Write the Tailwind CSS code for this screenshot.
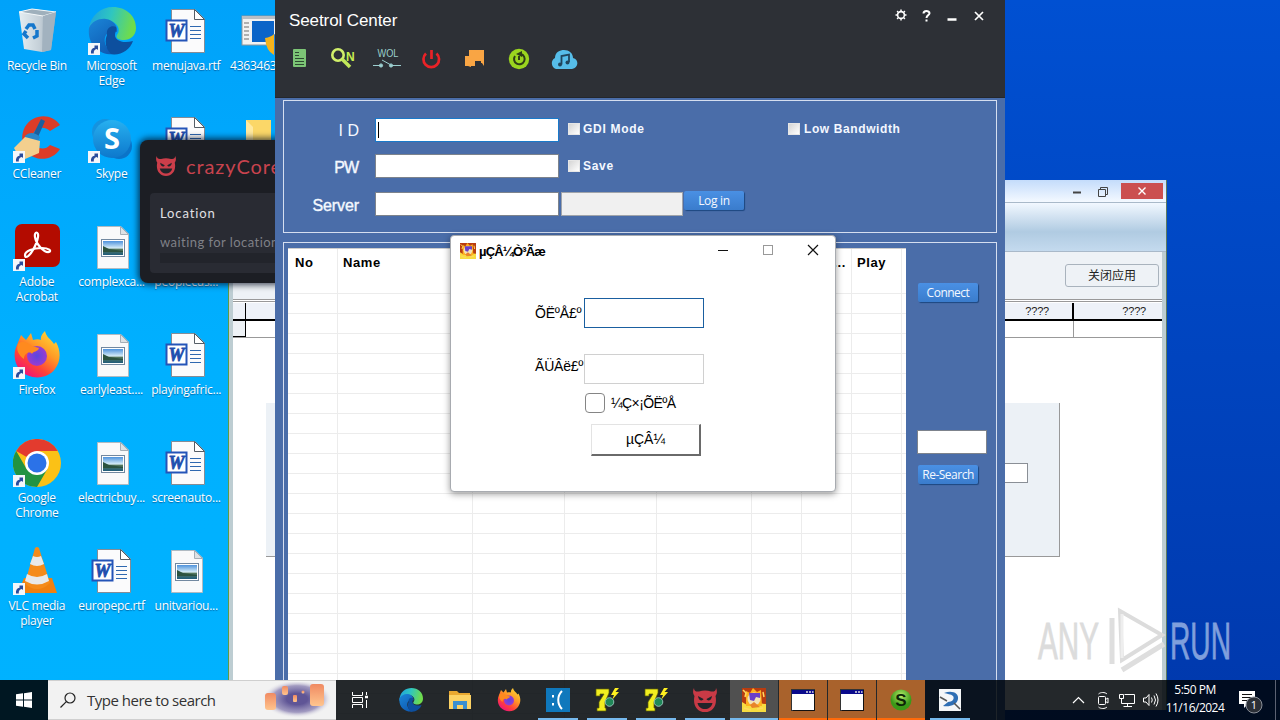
<!DOCTYPE html>
<html lang="en">
<head>
  <meta charset="UTF-8" />
  <meta name="viewport" content="width=device-width, initial-scale=1.0" />
  <title>Desktop</title>
  <script src="https://cdn.jsdelivr.net/npm/@tailwindcss/browser@4"></script>
</head>
<body class="relative w-[1280px] h-[720px] overflow-hidden bg-linear-to-b from-[#0050d2] to-[#0038ac] font-['Open_Sans','Noto_Sans',sans-serif]">

  <!-- Icon sprites -->
  <svg class="absolute w-0 h-0">
    <defs>
      <linearGradient id="gEdgeA" x1="0" y1="0" x2="1" y2="0.2"><stop offset="0" stop-color="#1d9fe0" /><stop offset=".5" stop-color="#2fc6c0" /><stop offset="1" stop-color="#6fdc4c" /></linearGradient>
      <linearGradient id="gEdgeB" x1="0" y1="0" x2="0.6" y2="1"><stop offset="0" stop-color="#1b86d8" /><stop offset="1" stop-color="#0f5cb4" /></linearGradient>
      <linearGradient id="gFox" x1="1" y1="0" x2=".3" y2="1"><stop offset="0" stop-color="#ffe83c" /><stop offset=".45" stop-color="#ff9a26" /><stop offset=".75" stop-color="#ff4338" /><stop offset="1" stop-color="#f0127a" /></linearGradient>
      <radialGradient id="gFoxIn"><stop offset="0" stop-color="#5a46e0" /><stop offset="1" stop-color="#9a3bd0" /></radialGradient>
      <linearGradient id="gSky" x1="0" y1="0" x2="0" y2="1"><stop offset="0" stop-color="#4e92dc" /><stop offset=".5" stop-color="#d5ecf7" /><stop offset=".6" stop-color="#55785c" /><stop offset="1" stop-color="#1f5c7c" /></linearGradient>
      <linearGradient id="gSkype" x1="0" y1="0" x2="0" y2="1"><stop offset="0" stop-color="#27b0f0" /><stop offset="1" stop-color="#0d78cc" /></linearGradient>
      <linearGradient id="gBin" x1="0" y1="0" x2="1" y2="0"><stop offset="0" stop-color="#e4edf2" /><stop offset=".55" stop-color="#c5d0d8" /><stop offset="1" stop-color="#8ea2b2" /></linearGradient>
      <radialGradient id="gBall" cx=".5" cy=".3"><stop offset="0" stop-color="#b8ec6a" /><stop offset="1" stop-color="#3a9818" /></radialGradient>
    </defs>
    <symbol id="link" viewBox="0 0 12 12">
      <rect width="12" height="12" fill="#f4f6fa" />
      <path d="M3 10.500C2.500 7 4 5 6.500 4.700V2.500H10V7L8.800 6C6.500 6.500 5.500 8 5.800 10.500Z" fill="#2b4c9c" />
    </symbol>
    <symbol id="bin" viewBox="0 0 48 48">
      <path d="M6 5L19 2L43 5L38 43L29 45L11 42Z" fill="url(#gBin)" />
      <path d="M6 5L19 2L43 5L30 9Z" fill="#9fb0bc" stroke="#f4f8fa" />
      <path d="M30 9L43 5L38 43L29 45Z" fill="#a2b2bf" />
      <path d="M13 22L16 18L20 18L22 22M24 23L24 29L20 31M15 31L11 27L13 24" fill="none" stroke="#1577cc" stroke-width="3.500" />
    </symbol>
    <symbol id="edge" viewBox="0 0 48 48">
      <path d="M1 21C3 8 13 0 25 0C38 0 48 9 48 21C48 29 42 33 36 33C31 33 27 31 29 28C34 22 28 14 20 14C11 14 3 20 1 27Z" fill="url(#gEdgeA)" />
      <path d="M1 21C4 14 12 11 18 12C26 13 30 20 29 25C22 22 15 27 17 36C18 41 22 45 27 47C12 49 -1 38 1 21Z" fill="url(#gEdgeB)" />
      <path d="M19 28C18 20 24 18 28 20C29 24 27 25 27 28C27 33 34 37 45 34C42 43 32 49 23 47C18 42 16 35 19 28Z" fill="#0d4f9e" />
    </symbol>
    <symbol id="word" viewBox="0 0 48 48">
      <path d="M9.500 2.500H33L42.500 12V45.500H9.500Z" fill="#fbfbfc" stroke="#858c96" />
      <path d="M32.500 2.500V12.500H42.500Z" fill="#fff" stroke="#555d66" />
      <path d="M28 19.500H39M28 23.500H39M28 27.500H39M28 31.500H39" stroke="#2f68b0" />
      <rect x="4.500" y="13.500" width="20" height="20" fill="#fff" stroke="#2454b8" stroke-width="2" />
      <text x="14.500" y="30" font-family="Liberation Serif" font-size="18" font-style="italic" font-weight="bold" text-anchor="middle" fill="#1f4fae" stroke="#1f4fae" stroke-width=".8">W</text>
    </symbol>
    <symbol id="pic" viewBox="0 0 48 48">
      <path d="M9.500 3.500H33L40.500 11V45.500H9.500Z" fill="#f9f9fa" stroke="#b0bac2" />
      <path d="M32.500 3.500V11.500H40.500Z" fill="#dde1e4" stroke="#a5aeb6" />
      <rect x="13.500" y="16.500" width="23" height="17" fill="#fff" stroke="#7288a0" />
      <rect x="15" y="18" width="20" height="14" fill="url(#gSky)" />
      <path d="M15 23L21 26L35 28V29L15 29Z" fill="#2c5340" />
    </symbol>
    <symbol id="installer" viewBox="0 0 48 48">
      <rect x="5" y="9" width="43" height="29" fill="#f2f2f2" stroke="#8f9499" />
      <path d="M5 9H48V12H5Z" fill="#b9bec4" />
      <path d="M7 16H12M7 20H12M7 24H12M7 28H12M7 32H12" stroke="#9a9a9a" stroke-width="1.500" />
      <rect x="15" y="14" width="22" height="21" fill="#0b64c8" />
      <path d="M28 31Q34 30 37 27V48Q29 44 28 31Z" fill="#f5b31c" />
      <path d="M37 27Q41 30 47 31Q46 44 37 48Z" fill="#2c7fd0" />
    </symbol>
    <symbol id="folder" viewBox="0 0 48 48">
      <path d="M9 5H34V45H9Z" fill="#fbd768" /><path d="M9 5L16 12V45H9Z" fill="#ffe9a0" />
    </symbol>
    <symbol id="ccleaner" viewBox="0 0 48 48">
      <path d="M47 10C41 1 29 -1 20 4C8 10 6 28 14 37C22 47 40 46 47 34L37 30C32 36 22 34 20 26C17 16 28 8 37 16Z" fill="#dc3c28" />
      <path d="M28 4L32 6L25 22L20 20Z" fill="#1b5f9e" />
      <path d="M12 21C16 17 22 17 27 22L25 27L12 26Z" fill="#2a86c8" />
      <path d="M12 22L27 26L26 38L12 44L5 40L1 33Z" fill="#f3cf8e" />
    </symbol>
    <symbol id="skype" viewBox="0 0 48 48">
      <circle cx="17" cy="17" r="13" fill="#1593df" /><circle cx="31" cy="31" r="13" fill="#0b74c8" />
      <circle cx="24" cy="24" r="19" fill="url(#gSkype)" />
      <text x="24" y="34" font-family="Open Sans" font-size="29" font-weight="bold" text-anchor="middle" fill="#fff">S</text>
    </symbol>
    <symbol id="acrobat" viewBox="0 0 48 48">
      <rect x="2" y="1" width="45" height="43" rx="7" fill="#b30b00" />
      <path d="M12 32C12 28 20 25 29 25C36 25 39 28 36 29C31 30 23 21 22 14C21 8 26 8 25 14C24 21 17 34 13 34Q12 34 12 32Z" fill="none" stroke="#fff" stroke-width="2.200" />
    </symbol>
    <symbol id="firefox" viewBox="0 0 48 48">
      <path d="M4 14L8 4L13 9L18 2L20 9C23 8 26 8 28 9C27 5 30 2 32 0C33 6 38 8 41 13L43 11C48 20 48 30 42 38C34 49 16 49 7 39C1 32 0 22 4 14Z" fill="url(#gFox)" />
      <circle cx="24" cy="25" r="10" fill="url(#gFoxIn)" />
      <path d="M5 13C9 9 14 11 19 15L26 17C25 21 20 20 19 23C17 20 11 22 11 28C5 24 3 18 5 13Z" fill="#ff8a1e" />
    </symbol>
    <symbol id="chrome" viewBox="0 0 48 48">
      <circle cx="24" cy="24" r="24" fill="#fbc116" />
      <path d="M24 24L3.200 12A24 24 0 0 1 44.800 12H24Z" fill="#e33b2e" />
      <path d="M3.200 12A24 24 0 0 0 24 48L34.400 30L24 36L13.600 30Z" fill="#229342" />
      <circle cx="24" cy="24" r="12" fill="#fff" /><circle cx="24" cy="24" r="9.500" fill="#2b72e8" />
    </symbol>
    <symbol id="vlc" viewBox="0 0 48 48">
      <path d="M11 31H39L44 46H5Z" fill="#f08010" />
      <path d="M22 1Q24 -1 26 1L37 36Q31 42 24 42Q17 42 12 36Z" fill="#f58b1a" />
      <path d="M20 9Q24 11 28 9L31 17Q24 21 17 17ZM14 27Q24 33 34 27L36 34Q24 41 12 34Z" fill="#e9e9e9" />
    </symbol>
    <symbol id="devil" viewBox="0 0 24 24">
      <path d="M1 0C1 3 3 4 6 3.500C10 2.300 14 2.300 18 3.500C21 4 23 3 23 0C24.500 3 24 6 22.500 8C24.500 17 20 24 12 24C4 24 -.5 17 1.500 8C0 6 -.5 3 1 0Z" />
      <path d="M5 8L10.500 11C9.500 13.500 5.500 13 5 8ZM19 8L13.500 11C14.500 13.500 18.500 13 19 8ZM4.500 15H19.500C18.500 19 15.500 21 12 21C8.500 21 5.500 19 4.500 15Z" fill="#22242a" />
    </symbol>
    <symbol id="crown" viewBox="0 0 24 24">
      <rect width="24" height="24" fill="#b83c10" />
      <path d="M0 14L5 17L12 15L24 16V24H0Z" fill="#f7dc40" />
      <path d="M4 3L8 5L11 0L15 4L19 2L20 18H4Z" fill="#ffb020" />
      <circle cx="12" cy="11" r="6.500" fill="#f3e2b4" />
      <path d="M7 5H18V10L14 9L12 13L8 12Z" fill="#6a3fc8" />
      <path d="M8 17L12 14L18 19L10 20Z" fill="#e8842a" />
      <path d="M1 2L4 5L3 9M21 4L22 9M2 20L9 22M15 21L21 20" stroke="#ffda60" stroke-width="1.500" fill="none" />
    </symbol>
    <symbol id="seven" viewBox="0 0 24 24">
      <path d="M1 1H14V5L10 14V20H11V23H2V20H4V14L9 6H5V8H1Z" fill="#f2ee20" stroke="#606000" stroke-width=".7" />
      <path d="M20 0L16 7H19L17 12L24 4H20.500L24 0Z" fill="#fff020" />
      <circle cx="14.500" cy="14" r="4.300" fill="#208858" stroke="#aad8d0" stroke-width=".8" />
    </symbol>
    <symbol id="blankwin" viewBox="0 0 24 24">
      <rect x=".5" y="1.500" width="23" height="21" fill="#fff" stroke="#333" />
      <path d="M1 2H23V6H1Z" fill="#0a0a8c" />
      <path d="M15 4H17M18 4H20M21 4H22.500" stroke="#ddd" stroke-width="1.500" />
      <path d="M2 22.500H23.500V2" stroke="#111" fill="none" />
    </symbol>
  </svg>

  <!-- Wallpaper, bright side -->
  <div class="absolute inset-y-0 left-0 w-[300px] bg-linear-to-b from-[#00a2fa] via-[#00b0ff] via-50% to-[#00b2ff]"></div>

  <!-- Desktop icons -->
  <div id="desktop" class="absolute top-0 left-0 grid grid-flow-col grid-rows-[repeat(6,108px)] auto-cols-[74.7px]"></div>

  <!-- Back window -->
  <section class="absolute left-[228px] top-[180px] w-[939px] h-[530px] flex flex-col bg-white border-l border-r border-l-[#5d9b45] border-r-[#5c7a60] font-['Liberation_Sans','Noto_Sans_CJK_SC',sans-serif]">
    <div class="h-[22px] shrink-0 flex justify-end items-center pr-[3px] bg-linear-to-b from-[#c4dcfb] to-[#f4f9ff]">
      <svg class="w-10 h-3.5 mr-[9px] -mt-px" viewBox="0 0 40 14" fill="none" stroke="#444"><path d="M1 8.500H9" stroke-width="2" /><path d="M26.500 5.500H33.500V12.500H26.500ZM28.500 5V3.500H35.500V10.500H34" /></svg>
      <div class="w-[42px] h-4 bg-[#cb4f50] flex items-center justify-center">
        <svg class="w-2 h-2" viewBox="0 0 8 8" stroke="#fff" stroke-width="1.400"><path d="M.5 .5L7.500 7.500M7.500 .5L.5 7.500" /></svg>
      </div>
    </div>
    <div class="h-[50px] shrink-0 border-y border-[#a9b9c9] bg-linear-to-b from-[#f2f8ff] via-[#b0cbe2] via-60% to-[#c4daee]"></div>
    <div class="flex-1 flex flex-col border-x-[4px] border-[#bdcdd2]">
      <div class="h-[47px] shrink-0 flex justify-end items-center pr-[3px] bg-[#eef2f6]">
        <button class="w-[94px] h-[23px] rounded-[3px] border border-[#a9b3bd] bg-[#eef2f6] text-xs text-[#222]">关闭应用</button>
      </div>
      <div class="flex-1 flex flex-col border-t-[3px] border-double border-[#999] pt-px">
        <div class="flex h-[18px] text-[11px] text-[#222] bg-[#eef2f8] border-b-2 border-black leading-4">
          <div class="w-[13px] border-r border-black"></div>
          <div class="w-[828px] border-r-2 border-black text-right pr-[23px] tracking-[-0.2px]">????</div>
          <div class="flex-1 text-right pr-4 tracking-[-0.2px]">????</div>
        </div>
        <div class="flex h-[17px] border-b border-[#999]">
          <div class="w-[13px] border-r border-black border-b bg-[#eef2f6]"></div>
          <div class="w-[828px] border-r border-[#999]"></div>
        </div>
        <div class="mt-[65px] ml-[33px] w-[794px] h-[154px] flex justify-end pt-[60px] pr-[31px] bg-[#ecf1f6] border-r border-b border-[#999]">
          <div class="w-[200px] h-5 bg-white border border-[#8a8f96]"></div>
        </div>
      </div>
    </div>
  </section>

  <!-- crazyCore toast -->
  <section class="absolute left-[140px] top-[140px] w-[260px] h-[143px] rounded-lg bg-[#1c1e24] shadow-[0_0_6px_2px_rgba(0,10,30,0.7)] px-2.5 pt-3.5 whitespace-nowrap font-[Lato,sans-serif]">
    <div class="flex items-center h-6 pl-1.5 gap-[10px]">
      <svg class="w-5 h-[22px] fill-[#cc3e4a]" preserveAspectRatio="none"><use href="#devil" /></svg>
      <span class="text-xl text-[#c8434e] tracking-[0.9px]">crazyCore</span>
    </div>
    <div class="mt-[15px] h-[80px] rounded bg-[#292b33] pl-2.5 pt-2.5">
      <p class="text-[13px] leading-5 text-[#e0e0e4] tracking-[0.9px]">Location</p>
      <p class="mt-[9px] text-[13px] leading-5 text-[#7f8087] tracking-[0.45px]">waiting for location</p>
      <div class="mt-px h-2.5 bg-[#22242b]"></div>
    </div>
  </section>

  <!-- Seetrol window -->
  <section class="absolute left-[275px] top-0 w-[730px] h-[720px] flex flex-col bg-[#4a6da9] font-['Liberation_Sans',sans-serif]">
    <header class="h-[98px] shrink-0 bg-[#2d3036] border-b border-[#24272d] pl-3.5 pr-[20px]">
      <div class="flex justify-between pt-2.5 h-[42px]">
        <h1 class="pt-px text-[17px] leading-5 tracking-[-0.1px] text-white">Seetrol Center</h1>
        <svg class="w-[90px] h-3.5 -mt-px" viewBox="0 0 90 14" fill="none" stroke="#fff">
          <circle cx="6" cy="6" r="3.400" stroke-width="1.600" /><path d="M6 .5V2M6 10V11.500M.5 6H2M10 6H11.500M2.100 2.100L3.200 3.200M8.800 8.800L9.900 9.900M9.900 2.100L8.800 3.200M3.200 8.800L2.100 9.900" stroke-width="1.500" />
          <path d="M28.500 4.500C28.500 1.200 34.500 1.200 34.500 4.300C34.500 6.300 31.500 6 31.500 9M31.500 10.500V12.500" stroke-width="2" />
          <path d="M52.500 10.500H61.500" stroke-width="2.500" /><path d="M80 3L88 11M88 3L80 11" stroke-width="1.700" />
        </svg>
      </div>
      <svg class="w-[300px] h-8" viewBox="289 42 300 32" fill="none">
        <rect x="293" y="49" width="13" height="18" rx="1" fill="#7cc576" /><path d="M295 52.500H299M295 55.500H299M295 58.500H304M295 61.500H304M295 64.500H304" stroke="#2d4a30" />
        <circle cx="338" cy="55" r="5.700" stroke="#d2f06a" stroke-width="2.600" /><path d="M342 59L350 67" stroke="#c2e85a" stroke-width="3.500" />
        <text x="346" y="61" font-size="12" font-weight="bold" fill="#c8ee50">N</text>
        <text x="377.500" y="57" font-size="10" textLength="21" lengthAdjust="spacingAndGlyphs" fill="#9ad0cc">WOL</text>
        <g stroke="#9ccfd0" fill="#9ccfd0"><path d="M373 65.500H380M392 65.500H401M382 60L391 65" /><circle cx="381" cy="65.500" r="1.600" /><circle cx="391" cy="65.500" r="1.600" /></g>
        <path d="M426 53.500A7.800 7.800 0 1 0 436.500 53.500M431.500 50V59" stroke="#ea2227" stroke-width="2.700" />
        <path d="M469 50H484V63H481V61H475V66H471V67L468 66H465V56H469Z" fill="#f9a544" /><path d="M480 60H484V66Z" fill="#f9a544" />
        <circle cx="519" cy="59" r="10.200" fill="#9ad51f" /><path d="M515 56A5.300 5.300 0 1 0 521 54M519 60V56" stroke="#2d3c16" stroke-width="2" /><path d="M522 51L522 57L516 54Z" fill="#2d3c16" />
        <path d="M556 69A6 6 0 0 1 555 58C555 52 560 50 564 50C569 50 573 53 573 58C579 59 579 68 572 69Z" fill="#56bde9" /><path d="M561.500 64.500V56L569 54.500V62" stroke="#20455c" stroke-width="1.800" /><circle cx="560" cy="64.500" r="2" fill="#20455c" /><circle cx="567.500" cy="62.500" r="2" fill="#20455c" />
      </svg>
    </header>

    <!-- Login form -->
    <div class="mx-2 mt-0.5 h-[133px] shrink-0 border border-[#d5def0] pt-[17px] flex flex-col gap-3 text-[#f4f8ff]">
      <div class="flex h-6">
        <label class="w-[75px] mr-4 pt-px text-right text-[16px] leading-6">I D</label>
        <div class="w-[184px] bg-white border border-[#1979ca] p-[2px]"><div class="w-px h-4 mt-px bg-black"></div></div>
        <div class="w-[220px] flex items-center gap-[3px] pl-[9px] pb-[3px] text-xs font-bold tracking-[0.7px]"><span class="w-3 h-3 bg-linear-to-br from-[#d5d5d5] to-white border border-[#e6e6e6]"></span>GDI Mode</div>
        <div class="flex items-center gap-1 pl-[9px] pb-[3px] text-xs font-bold tracking-[0.6px]"><span class="w-3 h-3 bg-linear-to-br from-[#d5d5d5] to-white border border-[#e6e6e6]"></span>Low Bandwidth</div>
      </div>
      <div class="flex h-6">
        <label class="w-[74px] mr-[17px] pt-0.5 text-right text-[16px] leading-6 tracking-[-1px] [-webkit-text-stroke:0.4px]">PW</label>
        <div class="w-[184px] bg-white border border-[#7d838c]"></div>
        <div class="flex items-center gap-[3px] pl-[9px] text-xs font-bold tracking-[0.7px]"><span class="w-3 h-3 bg-linear-to-br from-[#d5d5d5] to-white border border-[#e6e6e6]"></span>Save</div>
      </div>
      <div class="flex h-6 mt-0.5">
        <label class="w-[75px] mr-4 pt-0.5 text-right text-[16px] leading-6 tracking-[-0.1px] [-webkit-text-stroke:0.4px]">Server</label>
        <div class="w-[184px] bg-white border border-[#7d838c]"></div>
        <div class="w-[122px] ml-0.5 bg-[#f0f0f0] border border-[#a0a4aa]"></div>
        <button class="ml-px -mt-px w-[60px] h-[19px] rounded-[2px] bg-linear-to-b from-[#4a90e4] to-[#3a7ccc] shadow-[1px_1px_1px_#1c4680] font-['Open_Sans',sans-serif] text-xs leading-[18px] tracking-[-0.3px]">Log in</button>
      </div>
    </div>

    <!-- Client list -->
    <div class="mx-2 mt-[9px] flex-1 border border-b-0 border-[#d5def0] flex items-start pl-1 pt-[5px] overflow-hidden">
      <div id="list" class="w-[618px] shrink-0 bg-white border-t border-[#ccc] text-black">
        <div class="grid grid-cols-[50px_135px_92px_92px_95px_50px_50px_50px] h-[25px] text-[13px] leading-[27px] font-bold tracking-[0.6px] [&>*]:border-r [&>*]:border-[#ececec]">
          <div class="pl-[7px]">No</div><div class="pl-[5px]">Name</div><div></div><div></div><div></div><div></div>
          <div class="text-right pr-[5px]">...</div><div class="pl-[5px]">Play</div>
        </div>
      </div>
      <div class="ml-[11px] flex flex-col items-start pt-[35px] font-['Open_Sans',sans-serif] text-xs text-[#f4f8ff]">
        <button class="ml-px w-[60px] h-[19px] rounded-[2px] bg-linear-to-b from-[#4a90e4] to-[#3a7ccc] shadow-[1px_1px_1px_#1c4680] leading-[18px] tracking-[-0.5px]">Connect</button>
        <div class="mt-[128px] w-[70px] h-6 bg-white border border-[#7d838c]"></div>
        <button class="mt-[11px] ml-px w-[60px] h-[19px] rounded-[2px] bg-linear-to-b from-[#4a90e4] to-[#3a7ccc] shadow-[1px_1px_1px_#1c4680] leading-[18px] tracking-[-0.5px] whitespace-nowrap">Re-Search</button>
      </div>
    </div>
  </section>

  <!-- Login dialog -->
  <section class="absolute left-[450px] top-[235px] w-[386px] h-[257px] bg-white rounded-[4px] border border-[#a8abb0] shadow-[0_2px_7px_rgba(0,0,0,0.4)] text-black font-['Liberation_Sans',sans-serif]">
    <div class="h-8 flex items-center pl-[9px] pr-4">
      <svg class="w-4 h-4 -mt-0.5"><use href="#crown" /></svg>
      <span class="ml-[3px] flex-1 text-[13px] font-bold tracking-[-0.8px]">µÇÂ¼Ò³Ãæ</span>
      <svg class="w-[102px] h-3.5 -mt-1" viewBox="0 0 102 14" fill="none" stroke="#111"><path d="M1 7.500H11" /><rect x="46.500" y="2.500" width="9" height="9" stroke="#999" /><path d="M91 2L101 12M101 2L91 12" stroke-width="1.200" /></svg>
    </div>
    <div class="flex flex-col pt-[30px] text-[14px]">
      <div class="flex h-[30px] pl-[84px]">
        <label class="w-[49px] leading-[30px] tracking-[-0.2px] whitespace-nowrap">ÕËºÅ£º</label>
        <div class="w-[120px] border border-[#1a5fa0]"></div>
      </div>
      <div class="flex h-[30px] mt-[26px] pl-[84px]">
        <label class="w-[49px] leading-[24px] whitespace-nowrap tracking-[-0.2px]">ÃÜÂë£º</label>
        <div class="w-[120px] border border-[#d0d0d0]"></div>
      </div>
      <label class="flex items-center mt-[9px] h-5 pl-[134px] tracking-[-0.6px]"><span class="w-5 h-5 rounded-[4px] border border-[#858585] mr-1.5"></span>¼Ç×¡ÕËºÅ</label>
      <button class="mt-[11px] ml-[140px] w-[110px] h-8 border border-r-2 border-b-2 border-l-[#e3e3e3] border-t-[#e3e3e3] border-r-[#6a6a6a] border-b-[#6a6a6a]">µÇÂ¼</button>
    </div>
  </section>

  <!-- Watermark -->
  <svg class="absolute left-[1030px] top-[600px] w-[240px] h-20" viewBox="0 0 240 80" fill="none">
    <g font-family="Liberation Sans" font-size="51" stroke-width=".8">
      <text x="8" y="59" textLength="61" lengthAdjust="spacingAndGlyphs" fill="#dcdcdc" stroke="#dcdcdc">ANY</text>
      <text x="140" y="59" textLength="61" lengthAdjust="spacingAndGlyphs" fill="#7f9fdc" stroke="#7f9fdc">RUN</text>
    </g>
    <path d="M90 11L132 35L92 60Z" stroke="#dcdcdc" stroke-width="4" />
    <path d="M82 18V64M92 70L134 44" stroke="#dedede" stroke-width="5" />
    <path d="M92 14V58" stroke="#eee" stroke-width="3" />
  </svg>

  <!-- Taskbar -->
  <footer class="absolute left-0 bottom-0 w-[1280px] h-10 flex bg-[#000508]/86 text-white">
    <div class="w-12 flex items-center justify-center bg-black/20">
      <svg class="w-4 h-4" viewBox="0 0 16 16" fill="#fff"><path d="M0 2.300L7 1.300V7.500H0ZM8 1.200L16 0V7.500H8ZM0 8.500H7V14.700L0 13.700ZM8 8.500H16V16L8 14.800Z" /></svg>
    </div>
    <div class="w-72 flex items-center bg-[#f2f2f2] border-y border-[#cfcfcf] text-[#333] pl-3">
      <svg class="w-4 h-4" viewBox="0 0 16 16" fill="none" stroke="#222" stroke-width="1.200"><circle cx="10" cy="6" r="5" /><path d="M6.300 9.700L.5 15.500" /></svg>
      <span class="ml-[11px] flex-1 text-[15px] tracking-[-0.5px] whitespace-nowrap">Type here to search</span>
      <svg class="w-[72px] h-9 mr-0.5" viewBox="0 0 72 36">
        <defs>
          <radialGradient id="gNight"><stop offset=".3" stop-color="#5f5596" /><stop offset=".7" stop-color="#8d84b4" stop-opacity=".8" /><stop offset="1" stop-color="#f2f2f2" stop-opacity="0" /></radialGradient>
          <linearGradient id="gLamp" x1="0" y1="0" x2="0" y2="1"><stop offset="0" stop-color="#f08a62" /><stop offset="1" stop-color="#ffc58e" /></linearGradient>
        </defs>
        <ellipse cx="35" cy="17" rx="35" ry="19" fill="url(#gNight)" />
        <g fill="url(#gLamp)"><rect x="3" y="11" width="11" height="17" rx="3" /><rect x="20" y="4" width="6" height="9" rx="2" /><rect x="31" y="13" width="4" height="7" rx="1" /><circle cx="41" cy="10" r="1.500" /><rect x="48" y="2" width="14" height="22" rx="3" /></g>
      </svg>
    </div>
    <div class="w-12 flex items-center justify-center">
      <svg class="w-[18px] h-4" viewBox="0 0 18 16" fill="none" stroke="#fff"><path d="M1.500 0V3.500H11.500V0M1.500 16V12.500H11.500V16M1.500 5.500H11.500V10.500H1.500ZM15.500 0V3M15.500 8V16" /><path d="M14 5H17" stroke-width="2.500" /></svg>
    </div>
    <div class="flex gap-px ml-[3px] [&>div]:w-12 [&>div]:h-10 [&>div]:flex [&>div]:items-center [&>div]:justify-center [&_svg]:w-6 [&_svg]:h-6">
      <div><svg><use href="#edge" /></svg></div>
      <div><svg viewBox="0 0 24 24"><path d="M1 3H9L11 5H22V20H1Z" fill="#e9a830" /><path d="M1 7H23V21H1Z" fill="#fcd264" /><path d="M5 21V13H19V21H15V17H9V21Z" fill="#3a8fd0" /></svg></div>
      <div><svg><use href="#firefox" /></svg></div>
      <div class="relative"><svg viewBox="0 0 24 24"><rect width="24" height="24" fill="#0f78bc" /><path d="M7 7V9.500M7 15V17.500M16 3C11 8 11 16 16 21" stroke="#fff" stroke-width="2" fill="none" /></svg><i class="absolute bottom-0 inset-x-1 h-0.5 bg-[#76b9ed]"></i></div>
      <div class="relative"><svg><use href="#seven" /></svg><i class="absolute bottom-0 inset-x-1 h-0.5 bg-[#76b9ed]"></i></div>
      <div class="relative"><svg><use href="#seven" /></svg><i class="absolute bottom-0 inset-x-1 h-0.5 bg-[#76b9ed]"></i></div>
      <div class="relative"><svg class="fill-[#c83a46]"><use href="#devil" /></svg><i class="absolute bottom-0 inset-x-1 h-0.5 bg-[#76b9ed]"></i></div>
      <div class="bg-[#505050] border-b-2 border-[#76b9ed] pt-0.5"><svg><use href="#crown" /></svg></div>
      <div class="bg-[#a9622c] border-b-2 border-[#ff6a0a] pt-0.5"><svg><use href="#blankwin" /></svg></div>
      <div class="bg-[#a9622c] border-b-2 border-[#ff6a0a] pt-0.5"><svg><use href="#blankwin" /></svg></div>
      <div class="bg-[#a9622c] border-b-2 border-[#ff6a0a] pt-0.5"><svg viewBox="0 0 24 24"><circle cx="12" cy="12" r="10.500" fill="url(#gBall)" /><text x="12" y="18" font-family="Liberation Sans" font-size="17" font-weight="bold" text-anchor="middle" fill="#0c2406">S</text></svg></div>
      <div class="relative"><svg viewBox="0 0 24 24"><rect x="1" y="1" width="22" height="22" fill="#f4f6f8" /><path d="M6 5C14 2 21 5 20 11C19 17 12 19 5 18L10 14C14 14 17 11 15 8C13 6 9 6 6 5Z" fill="#2e6eb4" /><path d="M2 9L9 13M16 15L22 21" stroke="#555" stroke-width="1.500" /></svg><i class="absolute bottom-0 inset-x-1 h-0.5 bg-[#76b9ed]"></i></div>
    </div>
    <div class="flex-1 flex items-center justify-end">
      <svg class="w-[90px] h-5 mr-px" viewBox="0 0 90 20" fill="none" stroke="#fff">
        <path d="M4 13L9.500 7.500L15 13" stroke-width="1.200" />
        <rect x="29.500" y="6.500" width="7" height="8" rx="1" /><path d="M36.500 9.500L39 8V13L36.500 11.500M29.500 4C31.500 2 36 2 38 4M29.500 17C31.500 19 36 19 38 17" />
        <path d="M55.500 4.500H65.500V13.500H52.500V9M58.500 13.500V16.500M54.500 16.500H63M50.500 4.500H54.500V8.500H50.500ZM52.500 8.500V13" />
        <path d="M74.500 8H77L80 4.500V15.500L77 12H74.500ZM82.500 7.500Q84 10 82.500 12.500M85 5.500Q88 10 85 14.500M87 3.500Q91 10 87 16.500" />
      </svg>
      <div class="w-[70px] text-center text-xs leading-[18px] tracking-[-0.5px] whitespace-nowrap pb-0.5"><p>5:50 PM</p><p>11/16/2024</p></div>
      <div class="w-[45px] flex justify-end pr-[11px] pt-1">
        <svg class="w-7 h-6" viewBox="0 0 28 24"><path d="M3 1H19V14H12L8 18V14H3Z" fill="#fff" /><path d="M6 4.500H16M6 7.500H16M6 10.500H12" stroke="#111" /><circle cx="18" cy="15" r="8" fill="#2b2f36" stroke="#8a8f98" /><text x="18" y="19" font-family="Open Sans" font-size="11" text-anchor="middle" fill="#fff">1</text></svg>
      </div>
      <div class="h-10 w-[5px] border-l border-[#5c6272]"></div>
    </div>
  </footer>

  <script>
    // ---- DESKTOP ICONS (column by column) ----
    const icons = [
      ['bin', 'Recycle Bin'], ['ccleaner', 'CCleaner', 1], ['acrobat', 'Adobe Acrobat', 1], ['firefox', 'Firefox', 1], ['chrome', 'Google Chrome', 1], ['vlc', 'VLC media player', 1],
      ['edge', 'Microsoft Edge', 1], ['skype', 'Skype', 1], ['pic', 'complexca...'], ['pic', 'earlyleast....'], ['pic', 'electricbuy...'], ['word', 'europepc.rtf'],
      ['word', 'menujava.rtf'], ['word', ''], ['pic', 'peoplecus...'], ['word', 'playingafric...'], ['word', 'screenauto...'], ['pic', 'unitvariou...'],
      ['installer', '43634634...'], ['folder', '']
    ];
    document.getElementById('desktop').innerHTML = icons.map(([id, label, link]) => `
      <div class="flex flex-col items-center pt-[7px] pr-px">
        <div class="relative w-12 h-12">
          <svg class="w-12 h-12"><use href="#${id}" /></svg>
          ${link ? '<svg class="absolute left-0 bottom-0 w-3 h-3"><use href="#link" /></svg>' : ''}
        </div>
        <p class="mt-[3px] max-w-[74px] text-center text-xs leading-[15px] tracking-[-0.25px] text-white text-shadow-[0_1px_1px_rgba(0,40,90,0.5)]">${label}</p>
      </div>`).join('');

    // ---- EMPTY LIST ROWS ----
    const row = '<div class="grid grid-cols-[50px_135px_92px_92px_95px_50px_50px_50px] h-5 border-b border-[#ececec] [&>*]:border-r [&>*]:border-[#ececec]">' + '<div></div>'.repeat(8) + '</div>';
    document.getElementById('list').insertAdjacentHTML('beforeend', row.repeat(23));
  </script>
</body>
</html>
